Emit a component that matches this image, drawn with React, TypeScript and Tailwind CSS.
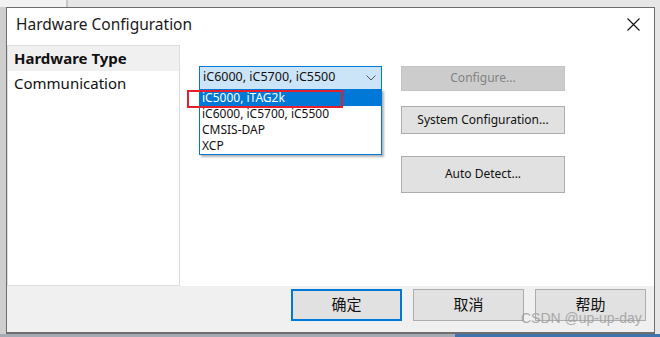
import React from "react";

const ui = { fontFamily: '"Noto Sans", "Open Sans", "Noto Sans CJK SC", sans-serif' };

const options = ["iC5000, iTAG2k", "iC6000, iC5700, iC5500", "CMSIS-DAP", "XCP"];

const SideButton = ({ label, disabled = false, h }: { label: string; disabled?: boolean; h: string }) => (
  <div
    className={`w-[164px] ${h} flex items-center justify-center text-[12px] border ${
      disabled ? "bg-[#cccccc] border-[#c4c4c4] text-[#838383]" : "bg-[#e1e1e1] border-[#adadad] text-[#111]"
    }`}
  >
    {label}
  </div>
);

const FooterButton = ({ label, primary = false }: { label: string; primary?: boolean }) => (
  <div
    className={`w-[111px] h-[32px] flex items-center justify-center bg-[#e1e1e1] text-[15px] text-[#111] ${
      primary ? "border-2 border-[#0078d7]" : "border border-[#adadad]"
    }`}
  >
    {label}
  </div>
);

export default function App() {
  return (
    <div className="relative w-[660px] h-[337px] overflow-hidden bg-[#e6e6e6]" style={ui}>
      {/* desktop behind */}
      <div className="absolute left-0 top-0 w-[68px] h-[7px] bg-[#f2f2f2] border-r-2 border-[#c8c8c8]" />
      <div className="absolute left-0 top-[7px] w-[6px] h-[330px] bg-[#cfcfcf]" />
      <div className="absolute left-0 bottom-0 w-[455px] h-[3px] bg-[#a6abb3]" />
      <div className="absolute left-[455px] bottom-0 w-[205px] h-[3px] bg-[#3e74ad]" />

      {/* dialog */}
      <div className="absolute left-[6px] top-[7px] w-[649px] h-[327px] bg-white border border-[#6e6e6e] border-b-2 flex flex-col">
        <div className="h-[34px] flex items-center justify-between pl-[9px] pr-[14px]">
          <span className="text-[15.5px] text-[#1a1a1a]">Hardware Configuration</span>
          <svg width="13" height="13" viewBox="0 0 13 13">
            <path d="M0.5 0.5L12.5 12.5M12.5 0.5L0.5 12.5" stroke="#111" strokeWidth="1.1" />
          </svg>
        </div>

        <div className="flex-1 flex pt-[3px]">
          <div className="w-[173px] h-[241px] border border-[#dcdcdc] flex flex-col">
            <div className="h-[25px] bg-[#f0f0f0] pl-[6px] flex items-center text-[15px] font-bold text-[#111]">
              Hardware Type
            </div>
            <div className="h-[25px] pl-[6px] flex items-center text-[15px] text-[#111]">Communication</div>
          </div>

          <div className="flex gap-[19px] pl-[19px] pt-[21px]">
            <div className="relative w-[183px]">
              <div className="h-[24px] bg-[#cce4f7] border border-[#0078d7] flex items-center justify-between pl-[3px] pr-[5px] text-[12.5px] text-[#111]">
                <span>iC6000, iC5700, iC5500</span>
                <svg width="10" height="6" viewBox="0 0 10 6">
                  <path d="M0.5 0.5L5 5L9.5 0.5" stroke="#555" fill="none" strokeWidth="1" />
                </svg>
              </div>
              <div className="absolute left-0 top-[23px] w-[183px] bg-white border border-[#0078d7] shadow-[2px_2px_2px_rgba(0,0,0,0.3)] text-[12px] text-[#111] flex flex-col">
                {options.map((o, i) => (
                  <div
                    key={o}
                    className={`h-[16px] leading-[16px] pl-[2px] ${i === 0 ? "bg-[#0078d7] text-white" : ""}`}
                  >
                    {o}
                  </div>
                ))}
              </div>
              <div className="absolute left-[-12px] top-[24px] w-[156px] h-[18px] border-2 border-[#e3202b]" />
            </div>

            <div className="flex flex-col">
              <SideButton label="Configure..." disabled h="h-[25px]" />
              <div className="h-[15px]" />
              <SideButton label="System Configuration..." h="h-[28px]" />
              <div className="h-[22px]" />
              <SideButton label="Auto Detect..." h="h-[37px]" />
            </div>
          </div>
        </div>

        <div className="h-[47px] bg-[#f0f0f0] flex justify-end gap-[11px] pr-[8px] pt-[3px]">
          <FooterButton label="确定" primary />
          <FooterButton label="取消" />
          <FooterButton label="帮助" />
        </div>
      </div>

      <div
        className="absolute left-[521px] top-[308px] text-[14px] text-[#9a9a9a] opacity-80"
        style={{ fontFamily: '"Liberation Sans", Arial, sans-serif' }}
      >
        CSDN @up-up-day
      </div>
    </div>
  );
}
